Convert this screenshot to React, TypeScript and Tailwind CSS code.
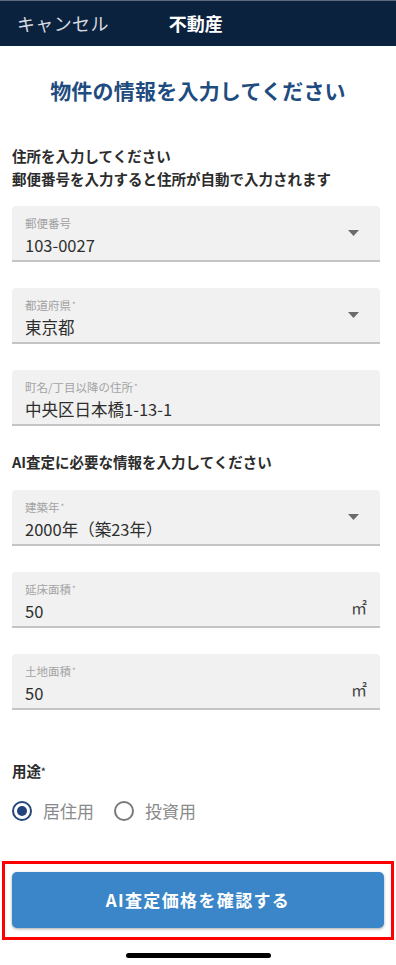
import React from 'react';

const font = { fontFamily: '"Noto Sans CJK JP", "Noto Sans", sans-serif' };

const Caret: React.FC = () => (
  <svg width="11" height="6" viewBox="0 0 11 6" className="shrink-0">
    <path d="M0 0 L11 0 L5.5 6 Z" fill="#6b6b6b" />
  </svg>
);

type FieldProps = {
  label: string;
  value: string;
  required?: boolean;
  select?: boolean;
  unit?: string;
};

const Field: React.FC<FieldProps> = ({ label, value, required, select, unit }) => (
  <div className="h-[56px] bg-[#f1f1f1] rounded-t-[4px] border-b-2 border-[#c4c4c4] flex items-center pl-[13px] pr-[21px]">
    <div className="flex-1 flex flex-col pt-[6px]">
      <span className="text-[11.5px] leading-[16px] text-[#a3a3a3]">
        {label}
        {required && <sup className="text-[8px] ml-[1px] relative -top-[2px]">*</sup>}
      </span>
      <span className="text-[16.5px] leading-[24px] text-[#2e2e2e] mt-[2px]">{value}</span>
    </div>
    {select && <Caret />}
    {unit && <span className="text-[16px] text-[#444] self-end mb-[7px] -mr-[8px]">{unit}</span>}
  </div>
);

const Radio: React.FC<{ label: string; checked?: boolean }> = ({ label, checked }) => (
  <div className="flex items-center gap-[11px]">
    <span
      className={`w-[20px] h-[20px] rounded-full border-2 flex items-center justify-center ${
        checked ? 'border-[#23477a]' : 'border-[#7a7a7a]'
      }`}
    >
      {checked && <span className="w-[10px] h-[10px] rounded-full bg-[#1f437a]" />}
    </span>
    <span className="text-[17px] leading-[24px] text-[#8a8a8a]">{label}</span>
  </div>
);

export default function App() {
  return (
    <div className="w-[396px] h-[965px] bg-white flex flex-col overflow-hidden" style={font}>
      <header className="h-[46px] bg-[#0b223f] border-t border-[#5d6a7c] flex items-center pl-[17px]">
        <span className="text-[18px] text-[#d5d9df] tracking-[0.02em]">キャンセル</span>
        <span className="text-[18px] text-white font-bold ml-[60px]">不動産</span>
      </header>

      <h1 className="mt-[30px] text-center text-[21px] leading-[28px] font-bold text-[#1f4c80] tracking-[0.01em]">
        物件の情報を入力してください
      </h1>

      <div className="mt-[40px] px-[12px] text-[14.5px] leading-[23px] font-bold text-[#2c2c2c]">
        <p>住所を入力してください</p>
        <p>郵便番号を入力すると住所が自動で入力されます</p>
      </div>

      <div className="mt-[16px] px-[12px] pr-[16px] flex flex-col gap-[26px]">
        <Field label="郵便番号" value="103-0027" select />
        <Field label="都道府県" value="東京都" required select />
        <Field label="町名/丁目以降の住所" value="中央区日本橋1-13-1" required />
      </div>

      <p className="mt-[24px] px-[12px] text-[14.5px] leading-[23px] font-bold text-[#2c2c2c]">
        AI査定に必要な情報を入力してください
      </p>

      <div className="mt-[17px] px-[12px] pr-[16px] flex flex-col gap-[26px]">
        <Field label="建築年" value="2000年（築23年）" required select />
        <Field label="延床面積" value="50" required unit="㎡" />
        <Field label="土地面積" value="50" required unit="㎡" />
      </div>

      <p className="mt-[49px] px-[12px] text-[14.5px] leading-[23px] font-bold text-[#2c2c2c]">
        用途<sup className="text-[9px] relative -top-[2px]">*</sup>
      </p>

      <div className="mt-[17px] px-[12px] flex items-center gap-[20px]">
        <Radio label="居住用" checked />
        <Radio label="投資用" />
      </div>

      <div className="mt-[38px] mx-[2px] border-[3px] border-[#ff0000] h-[79px] px-[7px] pt-[8px]">
        <button className="w-full h-[56px] rounded-[5px] bg-[#3b86c8] shadow-[0_1px_3px_rgba(0,0,0,0.35)] text-white text-[17px] font-bold tracking-[0.08em]">
          AI査定価格を確認する
        </button>
      </div>

      <div className="mt-[13px] flex justify-center">
        <div className="w-[145px] h-[5px] rounded-full bg-black" />
      </div>
    </div>
  );
}
